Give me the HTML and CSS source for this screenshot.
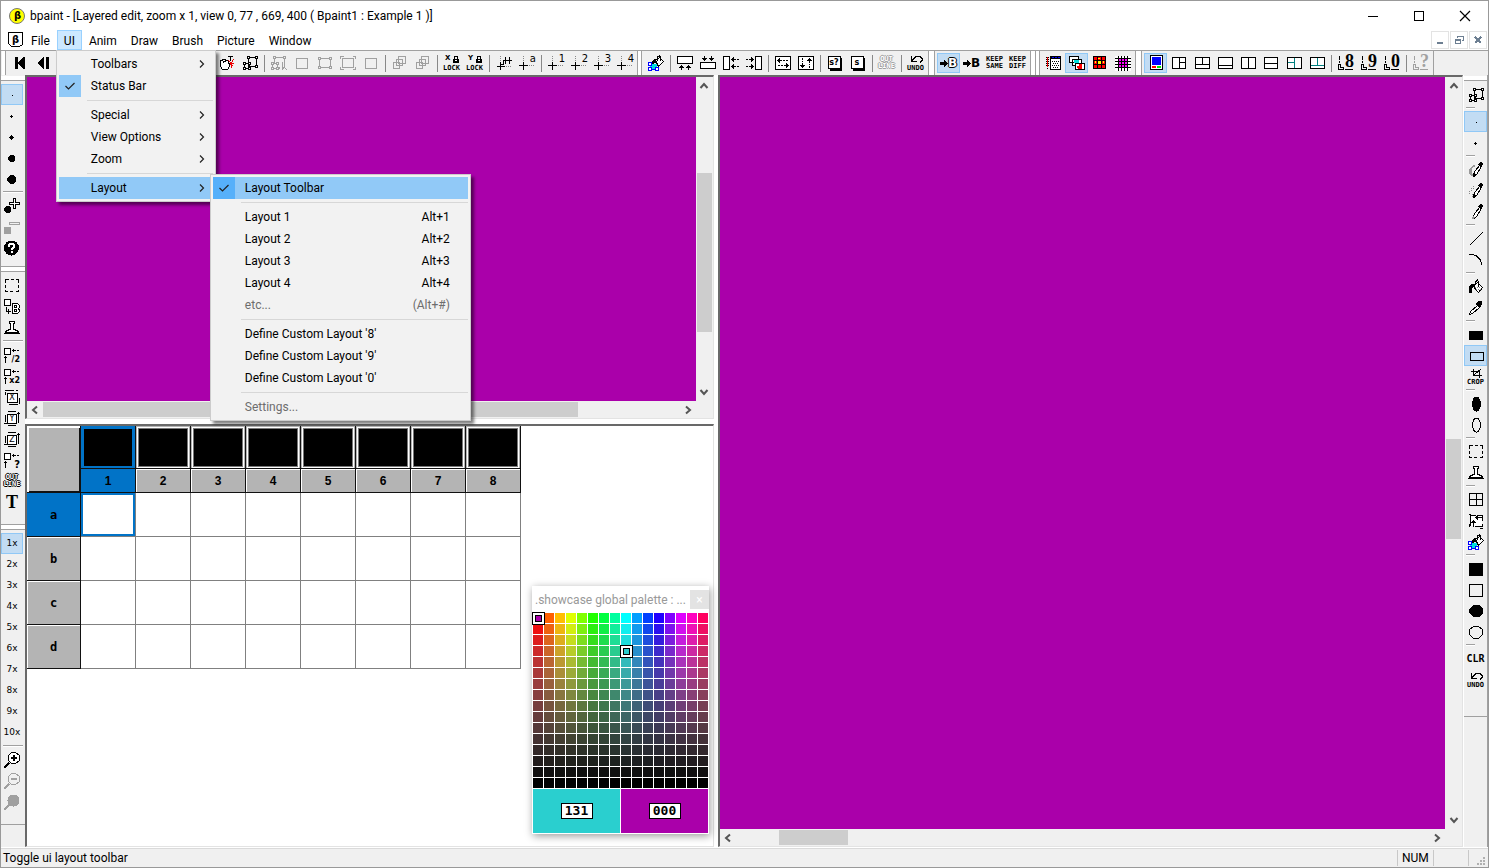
FILE: index.html
```html
<!DOCTYPE html>
<html lang="en">
<head>
<meta charset="utf-8">
<title>bpaint</title>
<link rel="stylesheet" href="styles.css">
</head>
<body>
<svg class="sprite" aria-hidden="true">
  <symbol id="first" viewBox="0 0 16 16"><path class="f" d="M3 2h3v5h1v-1h1v-1h1v-1h1v-1h1v-1h2v12h-2v-1h-1v-1h-1v-1h-1v-1h-1v-1h-1v5h-3z"/></symbol>
  <symbol id="prev" viewBox="0 0 16 16"><path class="f" d="M9 2v12h-1l-6-6 6-6zM11 2h3v12h-3z"/></symbol>
  <symbol id="hand" viewBox="0 0 16 16"><path class="s w" d="M1.500 5.500h2v-1h3v1h3v3h1v3l-2 3h-5l-2-3z"/><path class="s" d="M4.500 8v-2h2M9 1.500h5M11.500 1v5"/><path class="red" d="M9.500 5.500l5 6M14.500 4.500l-4 6M12.500 7v6M15 8.500h-4"/></symbol>
  <symbol id="nodes" viewBox="0 0 16 16"><path class="s" d="M6.500 2.500h8v9h-8zM2.500 8.500h5v5h-5z"/><path class="s w" d="M5.500 1.500h2v2h-2zM13.500 1.500h2v2h-2zM13.500 10.500h2v2h-2zM1.500 7.500h2v2h-2zM6.500 7.500h2v2h-2zM1.500 12.500h2v2h-2zM6.500 12.500h2v2h-2z"/></symbol>
  <symbol id="nodecur" viewBox="0 0 16 16"><path class="s" d="M3.500 2.500h10v8M3.500 2.500v6M1.500 8.500h5v5h-5zM8.500 12v2M11.500 7v7l2-2 2 3"/><path class="s w" d="M2.500 1.500h2v2h-2zM12.500 1.500h2v2h-2zM.500 7.500h2v2h-2zM5.500 7.500h2v2h-2zM.500 12.500h2v2h-2zM5.500 12.500h2v2h-2z"/></symbol>
  <symbol id="rect" viewBox="0 0 16 16"><path class="s" d="M2.500 3.500h11v10h-11z"/></symbol>
  <symbol id="rectn" viewBox="0 0 16 16"><path class="s" d="M2.500 3.500h11v9h-11z"/><path class="s w" d="M1.500 2.500h2v2h-2zM12.500 2.500h2v2h-2zM1.500 11.500h2v2h-2zM12.500 11.500h2v2h-2z"/></symbol>
  <symbol id="rectc" viewBox="0 0 16 16"><path class="s" d="M2.500 3.500h11v9h-11zM.500 4v-2.500h3M13 1.500h2.500v2.500M.500 12v2.500h3M13 14.500h2.500v-2.500"/></symbol>
  <symbol id="layers" viewBox="0 0 16 16"><path class="s bgf" d="M6.500 1.500h7v7h-7z"/><path class="s" d="M4.500 4.500h6v6h-6zM1.500 7.500h6v6h-6z"/></symbol>
  <symbol id="snap" viewBox="0 0 16 16"><path class="s" d="M1 11.500h8M4.500 7v8M4 9.500h3v-4h9M9.500 2v7M13.500 2v7"/><path class="dot" d="M4.500 1v6M10 11.500h6"/></symbol>
  <symbol id="snapt" viewBox="0 0 16 16"><path class="s" d="M0 10.500h9M4.500 7v8"/><path class="dot" d="M4.500 1v6M10 10.500h5"/></symbol>
  <symbol id="lock" viewBox="0 0 16 16"><path class="s" d="M10.500 4v-2l1-1h1l1 1v2"/><path class="f" d="M9 4h6v4h-6z"/><path class="wf" d="M11 5h2v1h-2z"/></symbol>
  <symbol id="bucket" viewBox="0 0 16 16"><path class="s w" d="M5.500 7.500l4-4 5 5-4 5z"/><path class="s" d="M7.500 6v-3l2-2 1 2v5"/><path class="f" d="M1 14v-6l2-3h4v3h-2l-1 2v4z"/><path class="dot" d="M7 8.500h6M8 10.500h5"/></symbol>
  <symbol id="bucketb" viewBox="0 0 16 16"><path class="s w" d="M7.500 5.500l4-3 4 4-5 5z"/><path class="s" d="M9.500 6v-4l2-1 1 1v4"/><path class="f" d="M3 9v-2l3-3h2v4h-2v4h-2z"/><path class="cyanf" d="M2 9h7v5h-7z"/><path class="blue" d="M.500 7.500h3v3h-3zM.500 12.500h3v3h-3zM7.500 12.500h3v3h-3zM4 14.500h3"/></symbol>
  <symbol id="down" viewBox="0 0 16 16"><path class="s w" d="M.500 1.500h15v7h-15z"/><path class="f" d="M4 10h1v1h1v1h1v1h-2v2h-1v-2h-2v-1h1v-1h1zM11 10h1v1h1v1h1v1h-2v2h-1v-2h-2v-1h1v-1h1z"/></symbol>
  <symbol id="up" viewBox="0 0 16 16"><path class="s w" d="M.500 7.500h15v6h-15z"/><path class="f" d="M4 1h1v2h2v1h-1v1h-1v1h-1v-1h-1v-1h-1v-1h2zM11 1h1v2h2v1h-1v1h-1v1h-1v-1h-1v-1h-1v-1h2z"/></symbol>
  <symbol id="lft" viewBox="0 0 16 16"><path class="s w" d="M.500 1.500h6v13h-6z"/><path class="f" d="M8 4h1v-1h1v-1h1v2h2v1h-2v2h-1v-1h-1v-1h-1zM14 4h2v1h-2zM8 11h1v-1h1v-1h1v2h2v1h-2v2h-1v-1h-1v-1h-1zM14 11h2v1h-2z"/></symbol>
  <symbol id="rgt" viewBox="0 0 16 16"><path class="s w" d="M9.500 1.500h6v13h-6z"/><path class="f" d="M8 4h-1v-1h-1v-1h-1v2h-2v1h2v2h1v-1h1v-1h1zM0 4h2v1h-2zM8 11h-1v-1h-1v-1h-1v2h-2v1h2v2h1v-1h1v-1h1zM0 11h2v1h-2z"/></symbol>
  <symbol id="swaph" viewBox="0 0 16 16"><path class="s w" d="M.500 1.500h15v13h-15z"/><path class="f" d="M2 5h1v-1h1v-1h1v2h2v1h-2v2h-1v-1h-1v-1h-1zM8 5h2v1h-2zM11 5h2v1h-2zM14 10h-1v-1h-1v-1h-1v2h-2v1h2v2h1v-1h1v-1h1zM3 10h2v1h-2zM6 10h2v1h-2z"/></symbol>
  <symbol id="swapv" viewBox="0 0 16 16"><path class="s w" d="M.500 1.500h15v13h-15z"/><path class="f" d="M11 3h1v1h1v1h1v1h-2v2h-1v-2h-2v-1h1v-1h1zM11 9h1v1h-1zM11 11h1v2h-1zM4 13h1v-1h1v-1h1v-1h-2v-2h-1v2h-2v1h1v1h1zM4 6h1v1h-1zM4 3h1v2h-1z"/></symbol>
  <symbol id="card" viewBox="0 0 16 16"><path class="f" d="M3 3h12v13h-12z"/><path class="s w" d="M1.500 1.500h12v12h-12z"/></symbol>
  <symbol id="undo" viewBox="0 0 16 16"><path class="s" d="M3.500 1v5h5M4 5.500l4-4h4l2 2v2l-2 2"/></symbol>
  <symbol id="arrow" viewBox="0 0 8 16"><path class="f" d="M0 7h4v-3l4 4.500-4 4.500v-3h-4z"/></symbol>
  <symbol id="anim" viewBox="0 0 16 16"><path class="red" d="M1.500 2v10"/><path class="dk" d="M.500 2v10M2.500 2v10M1.500 13v2"/><path class="s w" d="M4.500 1.500h10v13h-10z"/><path class="f" d="M5 2h10v2h-10z"/><path class="bluef" d="M6 2h2v1h-2zM9 2h2v1h-2zM12 2h2v1h-2z"/><path class="dk" d="M6 6.500h8M7 8.500h6M6 10.500h8M7 12.500h6"/></symbol>
  <symbol id="cel" viewBox="0 0 16 16"><path class="s w" d="M.500 1.500h9v6h-9zM3.500 4.500h9v6h-9z"/><path class="cyanf" d="M5 5h5v3h-5z"/><path class="s w" d="M6.500 8.500h9v6h-9z"/><path class="redf" d="M8 11h5v3h-4zM10 9h3v2h-3z"/></symbol>
  <symbol id="gridr" viewBox="0 0 16 16"><path class="f" d="M1 1h13v13h-13z"/><path class="redf" d="M2 2h3v3h-3zM6 2h3v3h-3zM10 2h3v3h-3zM2 6h3v3h-3zM10 6h3v3h-3zM2 10h3v3h-3zM6 10h3v3h-3zM10 10h3v3h-3z"/><path class="yelf" d="M6 6h3v3h-3zM6 3h2v1h-2zM3 6h1v2h-1zM11 6h1v2h-1z"/></symbol>
  <symbol id="gridm" viewBox="0 0 16 16"><path class="wf" d="M0 1h16v15h-16z"/><path class="magf" d="M4 4h9v9h-9z"/><path class="s" d="M0 3.500h16M0 6.500h16M0 9.500h16M0 12.500h16M3.500 1v15M6.500 1v15M9.500 1v15M12.500 1v15"/></symbol>
  <symbol id="l1" viewBox="0 0 16 16"><path class="s w" d="M2.500.500h12v14h-12z"/><path class="bluef" d="M4 2h9v8h-9z"/><path class="redf" d="M4 11h4v2h-4z"/><path class="greenf" d="M9 11h4v2h-4z"/></symbol>
  <symbol id="l2" viewBox="0 0 16 16"><path class="s w" d="M1.500 2.500h13v11h-13zM8.500 3v10M9 7.500h6"/></symbol>
  <symbol id="l3" viewBox="0 0 16 16"><path class="s w" d="M1.500 2.500h14v11h-14zM8.500 3v7M2 9.500h13"/></symbol>
  <symbol id="l4" viewBox="0 0 16 16"><path class="s w" d="M1.500 2.500h14v11h-14zM2 10.500h13"/></symbol>
  <symbol id="l5" viewBox="0 0 16 16"><path class="s w" d="M1.500 2.500h14v11h-14zM8.500 3v10"/></symbol>
  <symbol id="l6" viewBox="0 0 16 16"><path class="s w" d="M1.500 2.500h13v11h-13zM2 8.500h12"/></symbol>
  <symbol id="l7" viewBox="0 0 16 16"><path class="s w" d="M1.500 2.500h14v11h-14z"/><path class="teal" d="M8.500 3v10M2 7.500h6"/></symbol>
  <symbol id="l8" viewBox="0 0 16 16"><path class="s w" d="M1.500 2.500h14v11h-14z"/><path class="teal" d="M8.500 3v7M2 10.500h13"/></symbol>
  <symbol id="lay" viewBox="0 0 16 16"><path class="s" d="M1.500 1v4M1.500 6v2M.500 9.500v5h5v-2h-3v-3zM7 14.500h8"/></symbol>
  <symbol id="b1" viewBox="0 0 16 16"><path class="f" d="M8 8h1v1h-1z"/></symbol>
  <symbol id="b2" viewBox="0 0 16 16"><path class="f" d="M7 7h1v1h1v1h-1v1h-1v-1h-1v-1h1z"/></symbol>
  <symbol id="b3" viewBox="0 0 16 16"><path class="f" d="M7 6h1v1h1v1h1v1h-1v1h-1v1h-1v-1h-1v-1h-1v-1h1v-1h1z"/></symbol>
  <symbol id="b4" viewBox="0 0 16 16"><path class="f" d="M6 5h3l2 2v3l-2 2h-3l-2-2v-3z"/></symbol>
  <symbol id="b5" viewBox="0 0 16 16"><path class="f" d="M6 4h3l3 3v3l-3 3h-3l-3-3v-3z"/></symbol>
  <symbol id="addb" viewBox="0 0 16 16"><path class="f" d="M0 10l2-2h3l2 2v3l-2 2h-3l-2-2z"/><path class="s w" d="M9.500.500h2v4h4v2h-4v4h-2v-4h-4v-2h4z"/></symbol>
  <symbol id="delb" viewBox="0 0 16 16"><path class="f" d="M0 8h7v7h-7z"/><path class="s" d="M5.500 3.500h10v2h-10z"/></symbol>
  <symbol id="help" viewBox="0 0 16 16"><circle class="f" cx="7.500" cy="8" r="7.500"/><path class="ws" d="M5 7v-2l1-1h3l1 1v2l-2 2v1M8 11v2"/></symbol>
  <symbol id="sel" viewBox="0 0 16 16"><path class="s" d="M1.500 5v-3.500h3M7 1.500h3M12 1.500h2.500v3.500M14.500 7v3M14.500 12v1.500h-3M9 13.500h-3M4 13.500h-2.500v-2M1.500 10v-3"/></symbol>
  <symbol id="boxb" viewBox="0 0 16 16"><path class="s w" d="M.500.500h6v6h-6z"/><path class="s" d="M2.500 8v4h4M4.500 10v5"/><path class="s w" d="M8.500 4.500h5l2 2v2l-1 1 1 2v1l-2 2h-5z"/><path class="s" d="M10.500 6.500v2h2v-2zM10.500 10.500v2h2v-2z"/></symbol>
  <symbol id="stamp" viewBox="0 0 16 16"><path class="s w" d="M5.500 1.500h5v2h-1v6l4 1 1 2h-13l1-2 4-1v-6h-1z"/><path class="s" d="M0 13.500h16"/></symbol>
  <symbol id="xf" viewBox="0 0 16 16"><path class="s w" d="M.500 1.500h6v6h-6z"/><path class="s" d="M8 3.500h4M13 3.500h2M9.500 2v3M1.500 9v7M0 10.500h3"/></symbol>
  <symbol id="ax" viewBox="0 0 16 16"><path class="s w" d="M3.500 4.500h10v9h-10z"/><path class="s" d="M1 1.500h9M12 1.500h2M1.500 3v3M15.500 9v6M5 15.500h9"/></symbol>
  <symbol id="ay" viewBox="0 0 16 16"><path class="s w" d="M3.500 4.500h9v9h-9z"/><path class="s" d="M1.500 5v7M0 13.500h3M14.500 2v11M13 3.500h3M4 1.500h8M4 15.500h8"/></symbol>
  <symbol id="zin" viewBox="0 0 16 16"><path class="s w" d="M7.500.500h4l4 3v5l-4 3h-4l-3-3v-5z"/><path class="s t" d="M10 3v6M7 6h6M5 11l-5 5"/></symbol>
  <symbol id="zout" viewBox="0 0 16 16"><path class="s" d="M7.500.500h4l4 3v5l-4 3h-4l-3-3v-5z"/><path class="s t" d="M7 6h6M5 11l-5 5"/></symbol>
  <symbol id="zfull" viewBox="0 0 16 16"><circle class="f" cx="9.500" cy="6.500" r="6"/><path class="s t" d="M5 11l-5 5"/></symbol>
  <symbol id="brush" viewBox="0 0 16 16"><path class="graf" d="M5 3h2v2h-2l-1 3v3l2 3h-3l-2-3v-4z"/><path class="s w" d="M12.500 2.500l1 2-5 8-2 2-1-2 1-3z"/><path class="f" d="M10 3l2-3h2l1 2-2 4zM5 15l1-5 2 3z"/></symbol>
  <symbol id="brushd" viewBox="0 0 16 16"><path class="dot" d="M5.500 3v3M3.500 5v3M1.500 8v4M4.500 14v-3"/><path class="s w" d="M12.500 2.500l1 2-5 8-2 2-1-2 1-3z"/><path class="f" d="M10 3l2-3h2l1 2-2 4zM5 15l1-5 2 3z"/></symbol>
  <symbol id="pen" viewBox="0 0 16 16"><path class="s w" d="M12.500 2.500l1 2-5 8-2 2-1-2 1-3z"/><path class="f" d="M10 3l2-3h2l1 2-2 4z"/><path class="graf" d="M4 15l1-3 2 2z"/></symbol>
  <symbol id="line" viewBox="0 0 16 16"><path class="s" d="M2 14L15 1"/></symbol>
  <symbol id="curve" viewBox="0 0 16 16"><path class="s" d="M1 2.500h3l4 1 4 4 2 5"/></symbol>
  <symbol id="pick" viewBox="0 0 16 16"><path class="f" d="M11 1h3v3l-2 4-5-4z"/><path class="s w" d="M9.500 5.500l2 2-7 6-3 1 1-3z"/></symbol>
  <symbol id="rf" viewBox="0 0 16 16"><path class="f" d="M1 4h14v9h-14z"/></symbol>
  <symbol id="ro" viewBox="0 0 16 16"><path class="s" d="M2.500 4.500h13v8h-13z"/></symbol>
  <symbol id="crop" viewBox="0 0 16 16"><path class="s" d="M5.500 0v6h8M3 2.500h8v6M13 0l-7 6"/></symbol>
  <symbol id="ef" viewBox="0 0 16 16"><ellipse class="f" cx="8.500" cy="8" rx="4.500" ry="7.500"/></symbol>
  <symbol id="eo" viewBox="0 0 16 16"><ellipse class="s" cx="8.500" cy="8" rx="4" ry="7"/></symbol>
  <symbol id="win" viewBox="0 0 16 16"><path class="s" d="M1.500 1.500h13v12h-13zM8.500 2v11M2 7.500h12"/></symbol>
  <symbol id="rot" viewBox="0 0 16 16"><path class="s w" d="M2.500 2.500h12v11h-12z"/><path class="bgl" d="M1 6v8h6M8 2h2M15 8v3"/><path class="f" d="M7 4h1v-1h1v-1h1v2h4v1h-4v2h-1v-1h-1v-1h-1zM5 7h1v1h1v1h1v1h-2v4h-1v-4h-2v-1h1v-1h1z"/><path class="s" d="M1 1.500h2M12 15.500h3M1.500 11v3"/></symbol>
  <symbol id="sf" viewBox="0 0 16 16"><path class="f" d="M1 2h14v13h-14z"/></symbol>
  <symbol id="so" viewBox="0 0 16 16"><path class="s" d="M1.500 2.500h13v12h-13z"/></symbol>
  <symbol id="cf" viewBox="0 0 16 16"><path class="f" d="M5 2h6l4 4v4l-4 4h-6l-4-4v-4z"/></symbol>
  <symbol id="co" viewBox="0 0 16 16"><path class="s" d="M5.500 2.500h5l4 3v5l-4 4h-5l-4-4v-5z"/></symbol>
  <symbol id="check" viewBox="0 0 16 16"><path class="sm" d="M3.500 8l3 3 6-6"/></symbol>
  <symbol id="chev" viewBox="0 0 8 10"><path class="sm" d="M2 1.500l3.500 3.500-3.500 3.500"/></symbol>
  <symbol id="sc" viewBox="0 0 10 10"><path class="sb" d="M1.500 7l3.500-4 3.500 4"/></symbol>
</svg>

<div class="app">
  <header class="titlebar">
    <svg class="logo" viewBox="0 0 16 16"><circle cx="8" cy="8" r="7.500" fill="#ff0" stroke="#777"/><text x="5" y="11">β</text></svg>
    <h1 class="title">bpaint - [Layered edit, zoom x 1, view 0, 77 , 669, 400 ( Bpaint1 : Example 1 )]</h1>
    <div class="winctl">
      <button aria-label="Minimize"><svg viewBox="0 0 12 12"><path class="s" d="M1 6.500h10"/></svg></button>
      <button aria-label="Maximize"><svg viewBox="0 0 12 12"><path class="s" d="M1.500 1.500h9v9h-9z"/></svg></button>
      <button aria-label="Close"><svg viewBox="0 0 12 12"><path class="sm" d="M1 1l10 10M11 1L1 11"/></svg></button>
    </div>
  </header>

  <nav class="menubar">
    <svg class="doc" viewBox="0 0 16 16"><path class="s w" d="M.500.500h14v12l-3 2h-8l-3-3z"/><text x="4" y="11">β</text></svg>
    <button class="m">File</button>
    <div class="mwrap">
      <button class="m open">UI</button>
      <ul class="menu">
        <li><button><span class="ck"></span><span class="lb">Toolbars</span><svg class="chev"><use href="#chev"/></svg></button></li>
        <li><button><span class="ck on"><svg><use href="#check"/></svg></span><span class="lb">Status Bar</span></button></li>
        <li class="ln"></li>
        <li><button><span class="ck"></span><span class="lb">Special</span><svg class="chev"><use href="#chev"/></svg></button></li>
        <li><button><span class="ck"></span><span class="lb">View Options</span><svg class="chev"><use href="#chev"/></svg></button></li>
        <li><button><span class="ck"></span><span class="lb">Zoom</span><svg class="chev"><use href="#chev"/></svg></button></li>
        <li class="ln"></li>
        <li class="has-sub"><button class="hot"><span class="ck"></span><span class="lb">Layout</span><svg class="chev"><use href="#chev"/></svg></button>
          <ul class="menu sub">
            <li><button class="hot"><span class="ck on"><svg><use href="#check"/></svg></span><span class="lb">Layout Toolbar</span></button></li>
            <li class="ln"></li>
            <li><button><span class="ck"></span><span class="lb">Layout 1</span><span class="key">Alt+1</span></button></li>
            <li><button><span class="ck"></span><span class="lb">Layout 2</span><span class="key">Alt+2</span></button></li>
            <li><button><span class="ck"></span><span class="lb">Layout 3</span><span class="key">Alt+3</span></button></li>
            <li><button><span class="ck"></span><span class="lb">Layout 4</span><span class="key">Alt+4</span></button></li>
            <li><button disabled><span class="ck"></span><span class="lb">etc...</span><span class="key">(Alt+#)</span></button></li>
            <li class="ln"></li>
            <li><button><span class="ck"></span><span class="lb">Define Custom Layout '8'</span></button></li>
            <li><button><span class="ck"></span><span class="lb">Define Custom Layout '9'</span></button></li>
            <li><button><span class="ck"></span><span class="lb">Define Custom Layout '0'</span></button></li>
            <li class="ln"></li>
            <li><button disabled><span class="ck"></span><span class="lb">Settings...</span></button></li>
          </ul>
        </li>
      </ul>
    </div>
    <button class="m">Anim</button>
    <button class="m">Draw</button>
    <button class="m">Brush</button>
    <button class="m">Picture</button>
    <button class="m">Window</button>
    <div class="docctl">
      <button aria-label="Minimize document"><svg viewBox="0 0 10 10"><path d="M2 8h6"/></svg></button>
      <button aria-label="Restore document"><svg viewBox="0 0 10 10"><path class="thin" d="M3.500 3v-1.500h6v4h-2M1.500 4.500h5v4h-5zM1 5.500h6"/></svg></button>
      <button aria-label="Close document"><svg viewBox="0 0 10 10"><path d="M2 2l6 6M8 2l-6 6"/></svg></button>
    </div>
  </nav>

  <div class="toolbar">
    <span class="grip slim"></span>
    <div class="band">
      <button class="t" aria-label="First frame"><svg><use href="#first"/></svg></button>
      <button class="t" aria-label="Previous frame"><svg><use href="#prev"/></svg></button>
      <span class="room"></span>
      <button class="t" aria-label="Grab"><svg><use href="#hand"/></svg></button>
      <button class="t" aria-label="Reshape"><svg><use href="#nodes"/></svg></button>
      <span class="sep"></span>
      <button class="t" disabled aria-label="Pick shape"><svg><use href="#nodecur"/></svg></button>
      <button class="t" disabled aria-label="Box"><svg><use href="#rect"/></svg></button>
      <button class="t" disabled aria-label="Handles"><svg><use href="#rectn"/></svg></button>
      <button class="t" disabled aria-label="Corners"><svg><use href="#rectc"/></svg></button>
      <button class="t" disabled aria-label="Plain box"><svg><use href="#rect"/></svg></button>
      <span class="sep"></span>
      <button class="t" disabled aria-label="Layer up"><svg><use href="#layers"/></svg></button>
      <button class="t" disabled aria-label="Layer down"><svg><use href="#layers"/></svg></button>
      <span class="sep"></span>
      <button class="t lk"><svg><use href="#lock"/></svg><span class="ax">X</span><span class="px low">LOCK</span></button>
      <button class="t lk"><svg><use href="#lock"/></svg><span class="ax">Y</span><span class="px low">LOCK</span></button>
      <span class="sep"></span>
      <button class="t" aria-label="Snap to grid"><svg><use href="#snap"/></svg></button>
      <button class="t"><svg><use href="#snapt"/></svg><span class="sup">a</span></button>
      <span class="sep"></span>
      <button class="t"><svg><use href="#snapt"/></svg><span class="sup">1</span></button>
      <button class="t"><svg><use href="#snapt"/></svg><span class="sup">2</span></button>
      <button class="t"><svg><use href="#snapt"/></svg><span class="sup">3</span></button>
      <button class="t"><svg><use href="#snapt"/></svg><span class="sup">4</span></button>
    </div>
    <span class="grip slim"></span>
    <div class="band">
      <button class="t" aria-label="Fill path"><svg><use href="#bucketb"/></svg></button>
      <span class="sep"></span>
      <button class="t" aria-label="Push up"><svg><use href="#down"/></svg></button>
      <button class="t" aria-label="Push down"><svg><use href="#up"/></svg></button>
      <button class="t" aria-label="Push left"><svg><use href="#lft"/></svg></button>
      <button class="t" aria-label="Push right"><svg><use href="#rgt"/></svg></button>
      <span class="sep"></span>
      <button class="t" aria-label="Swap horizontally"><svg><use href="#swaph"/></svg></button>
      <button class="t" aria-label="Swap vertically"><svg><use href="#swapv"/></svg></button>
      <span class="sep"></span>
      <button class="t"><svg><use href="#card"/></svg><span class="in card">s?</span></button>
      <button class="t"><svg><use href="#card"/></svg><span class="in card">s</span></button>
      <span class="sep"></span>
      <button class="t" disabled><span class="px outl">OUT<br>LINE</span></button>
      <span class="sep"></span>
      <button class="t"><svg><use href="#undo"/></svg><span class="px low">UNDO</span></button>
    </div>
    <span class="grip"></span>
    <div class="band">
      <button class="t on ab"><svg class="arr"><use href="#arrow"/></svg><span class="big hollow">B</span></button>
      <button class="t ab"><svg class="arr"><use href="#arrow"/></svg><span class="big">B</span></button>
      <button class="t"><span class="px">KEEP<br>SAME</span></button>
      <button class="t"><span class="px">KEEP<br>DIFF</span></button>
    </div>
    <span class="grip narrow"></span>
    <span class="grip slim"></span>
    <div class="band">
      <button class="t" aria-label="Animation"><svg><use href="#anim"/></svg></button>
      <button class="t on" aria-label="Cels"><svg><use href="#cel"/></svg></button>
      <button class="t" aria-label="Palette"><svg><use href="#gridr"/></svg></button>
      <button class="t" aria-label="Grid"><svg><use href="#gridm"/></svg></button>
    </div>
    <span class="grip"></span>
    <div class="band">
      <button class="t on" aria-label="Layout 1"><svg><use href="#l1"/></svg></button>
      <button class="t" aria-label="Layout 2"><svg><use href="#l2"/></svg></button>
      <button class="t" aria-label="Layout 3"><svg><use href="#l3"/></svg></button>
      <button class="t" aria-label="Layout 4"><svg><use href="#l4"/></svg></button>
      <button class="t" aria-label="Layout 5"><svg><use href="#l5"/></svg></button>
      <button class="t" aria-label="Layout 6"><svg><use href="#l6"/></svg></button>
      <button class="t" aria-label="Layout 7"><svg><use href="#l7"/></svg></button>
      <button class="t" aria-label="Layout 7b"><svg><use href="#l8"/></svg></button>
      <span class="sep"></span>
      <button class="t"><svg><use href="#lay"/></svg><span class="num">8</span></button>
      <button class="t"><svg><use href="#lay"/></svg><span class="num">9</span></button>
      <button class="t"><svg><use href="#lay"/></svg><span class="num">0</span></button>
      <span class="sep"></span>
      <button class="t" disabled><svg><use href="#lay"/></svg><span class="num">?</span></button>
    </div>
  </div>

  <main class="work">
    <aside class="side left">
      <span class="hgrip"></span>
      <button class="v on" aria-label="Brush size 1"><svg><use href="#b1"/></svg></button>
      <button class="v" aria-label="Brush size 2"><svg><use href="#b2"/></svg></button>
      <button class="v" aria-label="Brush size 3"><svg><use href="#b3"/></svg></button>
      <button class="v" aria-label="Brush size 4"><svg><use href="#b4"/></svg></button>
      <button class="v" aria-label="Brush size 5"><svg><use href="#b5"/></svg></button>
      <span class="hsep"></span>
      <button class="v" aria-label="Grow brush"><svg><use href="#addb"/></svg></button>
      <button class="v" disabled aria-label="Shrink brush"><svg><use href="#delb"/></svg></button>
      <button class="v" aria-label="Help"><svg><use href="#help"/></svg></button>
      <span class="tail"></span>
      <span class="hgrip"></span>
      <button class="v" aria-label="Select"><svg><use href="#sel"/></svg></button>
      <button class="v" aria-label="Box to brush"><svg><use href="#boxb"/></svg></button>
      <button class="v" aria-label="Stamp"><svg><use href="#stamp"/></svg></button>
      <span class="hsep"></span>
      <button class="v"><svg><use href="#xf"/></svg><span class="sub2">/2</span></button>
      <button class="v"><svg><use href="#xf"/></svg><span class="sub2">x2</span></button>
      <button class="v"><svg><use href="#ax"/></svg><span class="in axis">X</span></button>
      <button class="v"><svg><use href="#ay"/></svg><span class="in axis">Y</span></button>
      <button class="v"><svg><use href="#ay"/></svg><span class="in axis">Z</span></button>
      <button class="v"><svg><use href="#xf"/></svg><span class="sub2 q">?</span></button>
      <button class="v"><span class="px outl">OUT<br>LINE</span></button>
      <button class="v"><span class="tee">T</span></button>
      <span class="tail tall"></span>
      <span class="hgrip"></span>
      <button class="v on z">1x</button>
      <button class="v z">2x</button>
      <button class="v z">3x</button>
      <button class="v z">4x</button>
      <button class="v z">5x</button>
      <button class="v z">6x</button>
      <button class="v z">7x</button>
      <button class="v z">8x</button>
      <button class="v z">9x</button>
      <button class="v z">10x</button>
      <span class="hsep"></span>
      <button class="v" aria-label="Zoom in"><svg><use href="#zin"/></svg></button>
      <button class="v" disabled aria-label="Zoom out"><svg><use href="#zout"/></svg></button>
      <button class="v" disabled aria-label="Zoom reset"><svg><use href="#zfull"/></svg></button>
      <span class="tail tall"></span>
    </aside>

    <section class="mid">
      <div class="pane view">
        <div class="canvas"></div>
        <div class="vs"><svg><use href="#sc"/></svg><div class="track"><i class="thumb v1"></i></div><svg class="dn"><use href="#sc"/></svg></div>
        <div class="hs"><svg class="lf"><use href="#sc"/></svg><div class="track"><i class="thumb h1"></i></div><svg class="rt"><use href="#sc"/></svg></div>
      </div>
      <div class="pane frames">
        <table class="grid">
          <thead>
            <tr class="thumbs"><th rowspan="2" class="corner"></th><td class="cur"><i></i></td><td><i></i></td><td><i></i></td><td><i></i></td><td><i></i></td><td><i></i></td><td><i></i></td><td><i></i></td></tr>
            <tr class="nums"><th class="cur">1</th><th>2</th><th>3</th><th>4</th><th>5</th><th>6</th><th>7</th><th>8</th></tr>
          </thead>
          <tbody>
            <tr><th class="cur">a</th><td class="cur"></td><td></td><td></td><td></td><td></td><td></td><td></td><td></td></tr>
            <tr><th>b</th><td></td><td></td><td></td><td></td><td></td><td></td><td></td><td></td></tr>
            <tr><th>c</th><td></td><td></td><td></td><td></td><td></td><td></td><td></td><td></td></tr>
            <tr><th>d</th><td></td><td></td><td></td><td></td><td></td><td></td><td></td><td></td></tr>
          </tbody>
        </table>
        <div class="palette">
          <div class="ptitle"><span>.showcase global palette : ...</span><button aria-label="Close palette">×</button></div>
          <div class="colors" id="colors"></div>
          <div class="swatches"><div class="fg"><output>131</output></div><div class="bg"><output>000</output></div></div>
        </div>
      </div>
    </section>

    <section class="pane view main">
      <div class="canvas"></div>
      <div class="vs"><svg><use href="#sc"/></svg><div class="track"><i class="thumb v2"></i></div><svg class="dn"><use href="#sc"/></svg></div>
      <div class="hs"><svg class="lf"><use href="#sc"/></svg><div class="track"><i class="thumb h2"></i></div><svg class="rt"><use href="#sc"/></svg></div>
    </section>

    <aside class="side right">
      <span class="hgrip"></span>
      <button class="v" aria-label="Nodes"><svg><use href="#nodes"/></svg></button>
      <span class="hsep"></span>
      <button class="v on" aria-label="Dot"><svg><use href="#b1"/></svg></button>
      <button class="v" aria-label="Small cross"><svg><use href="#b2"/></svg></button>
      <span class="hsep"></span>
      <button class="v" aria-label="Freehand"><svg><use href="#brush"/></svg></button>
      <button class="v" aria-label="Dotted freehand"><svg><use href="#brushd"/></svg></button>
      <button class="v" aria-label="Pen"><svg><use href="#pen"/></svg></button>
      <span class="hsep"></span>
      <button class="v" aria-label="Line"><svg><use href="#line"/></svg></button>
      <button class="v" aria-label="Curve"><svg><use href="#curve"/></svg></button>
      <span class="hsep"></span>
      <button class="v" aria-label="Fill"><svg><use href="#bucket"/></svg></button>
      <button class="v" aria-label="Pick colour"><svg><use href="#pick"/></svg></button>
      <span class="hsep"></span>
      <button class="v" aria-label="Filled rectangle"><svg><use href="#rf"/></svg></button>
      <button class="v on" aria-label="Rectangle"><svg><use href="#ro"/></svg></button>
      <button class="v"><svg><use href="#crop"/></svg><span class="px low">CROP</span></button>
      <span class="hsep"></span>
      <button class="v" aria-label="Filled ellipse"><svg><use href="#ef"/></svg></button>
      <button class="v" aria-label="Ellipse"><svg><use href="#eo"/></svg></button>
      <span class="hsep"></span>
      <button class="v" aria-label="Select"><svg><use href="#sel"/></svg></button>
      <button class="v" aria-label="Stamp"><svg><use href="#stamp"/></svg></button>
      <span class="hsep"></span>
      <button class="v" aria-label="Grid"><svg><use href="#win"/></svg></button>
      <button class="v" aria-label="Rotate"><svg><use href="#rot"/></svg></button>
      <button class="v" aria-label="Fill path"><svg><use href="#bucketb"/></svg></button>
      <span class="hsep"></span>
      <button class="v" aria-label="Filled square"><svg><use href="#sf"/></svg></button>
      <button class="v" aria-label="Square"><svg><use href="#so"/></svg></button>
      <button class="v" aria-label="Filled circle"><svg><use href="#cf"/></svg></button>
      <button class="v" aria-label="Circle"><svg><use href="#co"/></svg></button>
      <span class="hsep"></span>
      <button class="v"><span class="clr">CLR</span></button>
      <button class="v"><svg><use href="#undo"/></svg><span class="px low">UNDO</span></button>
      <span class="tail last"></span>
    </aside>
  </main>

  <footer class="status">
    <span class="msg">Toggle ui layout toolbar</span><span class="cell num-lock">NUM</span><span class="cell blank"></span>
    <span class="cell corner-grip"><svg viewBox="0 0 9 9"><path fill="#b0b0b0" d="M6 0h2v2h-2zM3 3h2v2h-2zM6 3h2v2h-2zM0 6h2v2h-2zM3 6h2v2h-2zM6 6h2v2h-2z"/></svg></span>
  </footer>
</div>
<script src="app.js"></script>
</body>
</html>
```

FILE: styles.css
```css
* { box-sizing: border-box; }
body { margin: 0; font-family: Roboto, "Noto Sans", sans-serif; font-size: 12px; color: #000; }
button { font: inherit; color: inherit; border: 0; background: none; padding: 0; margin: 0; }
svg { display: block; shape-rendering: crispEdges; overflow: visible; }
.sprite { position: absolute; width: 0; height: 0; }
.app { height: 100vh; display: flex; flex-direction: column; background: #fff; border: 1px solid #999; }

/* icon paint */
.f { fill: currentColor; }
.s { fill: none; stroke: currentColor; }
.s.w { fill: var(--paper, #fff); }
.s.bgf { fill: #f0f0f0; }
.s.t { stroke-width: 2; }
.sm { fill: none; stroke: currentColor; shape-rendering: auto; stroke-width: 1.2; }
.sb { fill: none; stroke: #555; shape-rendering: auto; stroke-width: 2; }
.dot { fill: none; stroke: #888; stroke-dasharray: 1 1; }
.dk { fill: none; stroke: #000; stroke-dasharray: 1 1; }
.bgl { fill: none; stroke: #f0f0f0; stroke-width: 2; }
.red { fill: none; stroke: #e00; }
.blue { fill: #fff; stroke: #00f; }
.teal { fill: none; stroke: #008080; }
.ws { fill: none; stroke: #fff; stroke-width: 2; }
.wf { fill: #fff; }
.redf { fill: #f00; }
.yelf { fill: #ff0; }
.magf { fill: #f0f; }
.bluef { fill: #00f; }
.greenf { fill: #0e0; }
.cyanf { fill: #0dd; }
.graf { fill: #999; }

/* title */
.titlebar { display: flex; align-items: center; height: 29px; padding-left: 8px; flex: none; }
.logo { width: 16px; height: 16px; shape-rendering: auto; }
.logo text, .doc text { font: bold 10px "DejaVu Sans", sans-serif; }
.title { font-size: 12px; font-weight: 400; margin: 0 auto 0 5px; }
.winctl { display: flex; }
.winctl button { width: 46px; height: 28px; display: grid; place-items: center; }
.winctl svg { width: 12px; height: 12px; }

/* menu bar */
.menubar { display: flex; align-items: center; height: 20px; flex: none; padding-left: 7px; position: relative; z-index: 5; }
.doc { width: 16px; height: 16px; }
.m { height: 20px; padding: 1px 6px 0; border: 1px solid transparent; line-height: 18px; display: block; }
.m.open { background: #cce8ff; border-color: #99d1ff; }
.mwrap { position: relative; }
.docctl { margin-left: auto; display: flex; gap: 1px; padding-right: 1px; }
.docctl button { width: 18px; height: 18px; border: 1px solid #e3e3e3; display: grid; place-items: center; color: #6d7f92; }
.docctl svg { width: 10px; height: 10px; }
.docctl path { fill: none; stroke: currentColor; stroke-width: 2; }
.docctl .thin { stroke-width: 1; }
.menu { position: absolute; left: -1px; top: 20px; width: 160px; margin: 0; padding: 2px; list-style: none; background: #f2f2f2; border: 1px solid #ccc; box-shadow: 3px 3px 3px rgba(0,0,0,.5); z-index: 10; }
.menu button { display: flex; align-items: center; width: 100%; height: 22px; text-align: left; white-space: nowrap; }
.menu button.hot { background: #91c9f7; }
.menu button:disabled { color: #6d6d6d; }
.ck { width: 22px; height: 22px; flex: none; display: grid; place-items: center; color: #222; }
.ck.on { background: #91c9f7; }
.hot .ck.on { background: #56b0fa; }
.ck svg { width: 16px; height: 16px; }
.lb { flex: 1; padding-left: 10px; }
.chev { width: 8px; height: 10px; flex: none; margin-right: 7px; color: #222; }
.key { padding-right: 18px; }
.ln { height: 7px; padding: 3px 0 3px 28px; }
.ln::after { content: ""; display: block; height: 1px; background: #d7d7d7; }
.has-sub { position: relative; }
.menu.sub { left: 151px; top: -3px; width: 261px; }

/* main toolbar */
.toolbar { display: flex; height: 25px; flex: none; background: #f0f0f0; border-top: 1px solid #a0a0a0; padding-left: 1px; overflow: hidden; }
.band { display: flex; align-items: center; border-right: 1px solid #a0a0a0; padding-right: 1px; }
.grip { width: 8px; background: linear-gradient(90deg, #fff 5px, #a0a0a0 5px, #a0a0a0 6px, #f0f0f0 6px); flex: none; }
.grip.slim { width: 6px; background: linear-gradient(90deg, #fff 3px, #a0a0a0 3px, #a0a0a0 4px, #f0f0f0 4px); }
.grip.narrow { width: 5px; background: #fff; border-right: 1px solid #a0a0a0; }
.room { width: 161px; }
.t { width: 23px; height: 20px; position: relative; display: grid; place-items: center; flex: none; }
.t > svg, .v > svg { width: 16px; height: 16px; }
.t:disabled, .v:disabled { color: #a0a0a0; --paper: #f0f0f0; --edge: #a0a0a0; }
.t.on, .v.on { background: #c2dcf3; outline: 1px solid #90c8f6; outline-offset: -1px; }
.sep { width: 6px; height: 17px; flex: none; border-left: 3px solid #f0f0f0; border-right: 2px solid #f0f0f0; background: #888; }
.px { font: bold 7px/7px "DejaVu Sans Mono", monospace; text-align: center; }
.px.low { position: absolute; left: 0; right: 0; bottom: 1px; }
.px.outl, .hollow { color: #fff; text-shadow: 1px 0 var(--edge, #000), -1px 0 var(--edge, #000), 0 1px var(--edge, #000), 0 -1px var(--edge, #000); }
.sup { position: absolute; right: 2px; top: 1px; font: 10px/10px "DejaVu Sans", sans-serif; }
.ax { position: absolute; left: 5px; top: 2px; font: bold 7px/7px "DejaVu Sans", sans-serif; }
.in { position: absolute; inset: 0; display: grid; place-items: center; font: bold 8px/8px "DejaVu Sans", sans-serif; }
.in.card { padding-right: 1px; padding-bottom: 1px; }
.in.axis { font-weight: 400; padding-top: 2px; }
.num { position: absolute; right: 3px; top: 1px; font: bold 18px/15px "Liberation Serif", serif; }
.t.ab { display: flex; align-items: center; justify-content: center; }
.t .arr { width: 8px; }
.big { font: bold 12px/16px "DejaVu Sans", sans-serif; }

/* workspace */
.work { flex: 1; min-height: 0; display: flex; padding-bottom: 1px; }
.side { width: 24px; flex: none; display: flex; flex-direction: column; background: #f0f0f0; overflow: hidden; padding-top: 1px; }
.side.right { margin-left: 1px; border-right: 1px solid #a0a0a0; }
.v { width: 23px; height: 21px; flex: none; position: relative; display: grid; place-items: center; }
.left .v { width: 22px; }
.z { font: 9px/9px "DejaVu Sans", sans-serif; }
.hgrip { height: 8px; flex: none; background: #fff; border-bottom: 3px solid #f0f0f0; box-shadow: inset 0 -1px #a0a0a0; }
.hsep { height: 6px; flex: none; margin: 0 2px; background: linear-gradient(#f0f0f0 2px, #a0a0a0 2px, #a0a0a0 3px, #fff 3px, #fff 4px, #f0f0f0 4px); }
.right .hsep { margin-right: 12px; }
.tail { height: 9px; flex: none; border-bottom: 1px solid #a0a0a0; }
.tail.tall { height: 13px; }
.tail.last { height: 27px; }
.sub2 { position: absolute; right: 3px; bottom: 1px; font: bold 8px/9px "DejaVu Sans", sans-serif; }
.sub2.q { font-size: 10px; }
.tee { font: bold 18px/20px "Liberation Serif", serif; }
.clr { font: bold 10px/10px "DejaVu Sans Mono", monospace; }

.mid { flex: 691 1 0; min-width: 0; display: grid; grid-template-rows: 344fr 422fr; gap: 5px; }
.pane { border-top: 2px solid #696969; border-left: 2px solid #696969; border-right: 1px solid #e3e3e3; border-bottom: 1px solid #e3e3e3; min-width: 0; min-height: 0; background: #fff; }
.view { display: grid; grid-template: 1fr 17px / 1fr 17px; background: #f0f0f0; }
.main { flex: 745 1 0; margin-left: 4px; }
.canvas { background: #a0a; }
.vs, .hs { display: flex; align-items: center; background: #f0f0f0; }
.vs { flex-direction: column; }
.vs svg, .hs svg { width: 10px; height: 10px; margin: 4px 3px; flex: none; }
.dn { transform: rotate(180deg); }
.lf { transform: rotate(-90deg); }
.rt { transform: rotate(90deg); }
.track { flex: 1; align-self: stretch; display: flex; min-width: 0; min-height: 0; }
.vs .track { flex-direction: column; }
.thumb { background: #cdcdcd; flex: none; }
.vs .thumb { margin-left: 1px; margin-right: 1px; }
.hs .thumb { margin-top: 1px; margin-bottom: 1px; }
.v1 { height: 55%; margin-top: 78px; }
.h1 { width: 84%; }
.v2 { height: 14%; margin-top: 344px; }
.h2 { width: 10%; margin-left: 43px; }

/* frame grid */
.frames { position: relative; }
.grid { border-spacing: 0; table-layout: fixed; width: 494px; }
.grid th, .grid td { padding: 0; width: 55px; height: 44px; border-right: 1px solid #808080; border-bottom: 1px solid #808080; }
.grid th { background: #b4b4b4; border-color: #111; box-shadow: inset 1px 1px #fff; font: bold 12px "DejaVu Sans Mono", monospace; }
.grid tbody th { width: 54px; }
.grid .corner { width: 54px; box-shadow: inset 2px 2px #fff, inset -1px -1px #111; }
.grid .thumbs td { height: 42px; background: #b4b4b4; border-color: #111; border-bottom: 0; }
.thumbs i { display: block; height: 41px; margin: 0 1px; background: #000; border: 1px solid #fff; outline: 1px solid #777; outline-offset: -2px; }
.grid .nums th { height: 25px; border-top: 1px solid #111; font-family: "Liberation Sans", sans-serif; }
.grid .nums th.cur, .grid tbody th.cur, .grid .thumbs td.cur { background: #0173c7; box-shadow: none; }
.thumbs .cur i { border-color: #0173c7; outline-color: #0173c7; }
.grid tbody td.cur { box-shadow: inset 0 0 0 2px #0173c7; }

/* palette window */
.palette { position: absolute; left: 505px; top: 160px; width: 177px; background: #fff; border-left: 1px solid #fff; box-shadow: 1px 2px 8px rgba(0,0,0,.4); }
.ptitle { height: 27px; display: flex; align-items: center; justify-content: space-between; padding-left: 2px; color: #999; white-space: nowrap; }
.ptitle button { width: 19px; height: 19px; background: #e3e3e3; color: #fff; }
.colors { display: grid; grid-template-columns: repeat(16, 11px); }
.c { height: 11px; border-right: 1px solid #fff; border-bottom: 1px solid #fff; position: relative; }
.pick { outline: 1px solid #000; border: 2px solid #fff; box-shadow: inset 0 0 0 1px #000; z-index: 1; }
.swatches { display: flex; gap: 1px; padding: 0 1px 1px 0; }
.swatches div { flex: 1; height: 44px; display: grid; place-items: center; }
.fg { background: #2acfcf; }
.bg { background: #a0a; }
.swatches output { width: 32px; height: 16px; background: #fff; border: 1px solid #000; text-align: center; font: bold 13px/14px "DejaVu Sans Mono", monospace; }

/* status bar */
.status { height: 19px; flex: none; display: flex; align-items: center; background: #f0f0f0; border-top: 1px solid #dadada; line-height: 18px; }
.msg { flex: 1; padding-left: 2px; }
.cell { border-left: 1px solid #c8c8c8; height: 16px; line-height: 17px; }
.num-lock { width: 36px; padding-left: 4px; }
.blank { width: 35px; }
.corner-grip { width: 20px; display: flex; justify-content: flex-end; align-items: flex-end; padding-right: 2px; }
.corner-grip svg { width: 9px; height: 9px; }
```

FILE: app.js
```js
// Palette: 16 hues across, fading to black down the rows.
const colors = document.getElementById('colors');
for (let row = 0; row < 16; row++) {
  for (let col = 0; col < 16; col++) {
    const k = 1 - row / 15;
    const max = 255 * k;
    const min = max * (1 - k);
    const channel = n => {
      const h = (n + col * 22.5 / 60) % 6;
      return Math.round(max - (max - min) * Math.max(0, Math.min(h, 4 - h, 1)));
    };
    const cell = document.createElement('div');
    cell.className = 'c';
    const first = row === 0 && col === 0;
    cell.style.backgroundColor = first ? '#a0a' : `rgb(${channel(5)},${channel(3)},${channel(1)})`;
    if (first || (row === 3 && col === 8)) cell.classList.add('pick');
    colors.append(cell);
  }
}
```
